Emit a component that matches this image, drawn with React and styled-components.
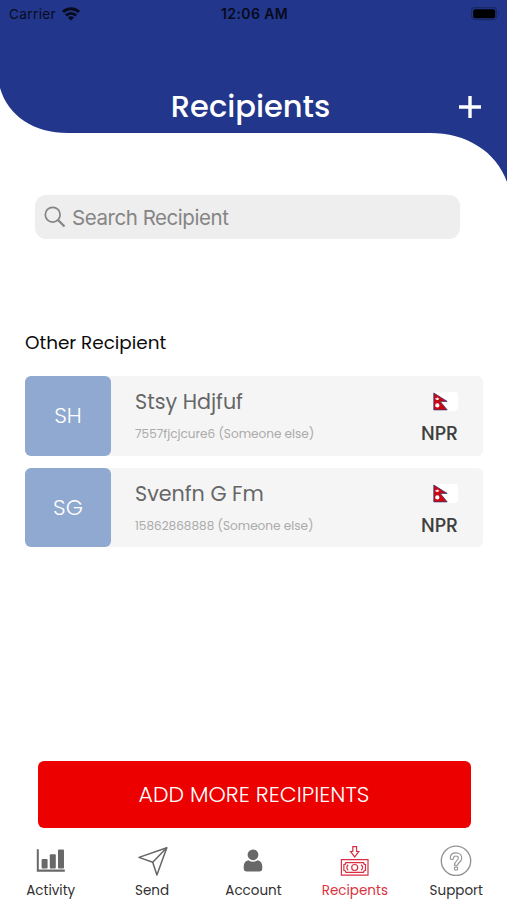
import styled, { createGlobalStyle } from "styled-components";

const GlobalStyle = createGlobalStyle`
  * {
    box-sizing: border-box;
  }
  body {
    margin: 0;
    background: #fff;
    font-family: Poppins, Inter, "Liberation Sans", sans-serif;
  }
`;

const Screen = styled.div`
  width: 507px;
  height: 900px;
  display: flex;
  flex-direction: column;
  background: #fff;
  overflow: hidden;
`;
const Header = styled.header`
  position: relative;
  height: 195px;
  flex: none;
`;
const Curve = styled.svg`
  position: absolute;
  top: 0;
  left: 0;
`;
const StatusBar = styled.div`
  position: relative;
  display: grid;
  grid-template-columns: 1fr auto 1fr;
  align-items: center;
  height: 27px;
  padding: 0 7px 0 9px;
  font-family: Inter, sans-serif;
  font-size: 14px;
  color: #070b1c;
`;
const Carrier = styled.div`
  display: flex;
  align-items: center;
  gap: 6px;
  font-size: 13.5px;
  letter-spacing: 0.4px;
`;
const Clock = styled.div`
  font-weight: 600;
  letter-spacing: 0.4px;
`;
const Battery = styled.svg`
  justify-self: end;
`;
const TitleBar = styled.div`
  position: relative;
  display: grid;
  grid-template-columns: 1fr auto 1fr;
  align-items: center;
  height: 46px;
  margin-top: 57px;
  padding: 0 26px 0 20px;
`;
const Title = styled.h1`
  grid-column: 2;
  margin: 0;
  font-size: 30.5px;
  line-height: 46px;
  font-weight: 500;
  color: #fff;
`;
const AddIcon = styled.svg`
  justify-self: end;
`;
const SearchBox = styled.div`
  display: flex;
  align-items: center;
  flex: none;
  gap: 6px;
  width: 425px;
  height: 44px;
  margin-left: 35px;
  padding-left: 9px;
  border-radius: 11px;
  background: #eee;
  font-family: Inter, sans-serif;
  font-size: 20.5px;
  letter-spacing: -0.45px;
  color: #858585;
`;
const SectionTitle = styled.h2`
  margin: 92px 0 0 25px;
  font-size: 18.4px;
  line-height: 24px;
  font-weight: 400;
  color: #0b0b0b;
`;
const List = styled.div`
  display: flex;
  flex-direction: column;
  gap: 12px;
  margin: 21px 24px 0 25px;
`;
const Row = styled.div`
  display: flex;
  height: 79.5px;
  border-radius: 6px;
  background: #f5f5f5;
`;
const Avatar = styled.div`
  display: flex;
  align-items: center;
  justify-content: center;
  width: 86px;
  border-radius: 6px;
  background: #8fa9d0;
  color: #fff;
  font-size: 22px;
  font-weight: 300;
`;
const Details = styled.div`
  flex: 1;
  padding: 11px 0 0 24px;
`;
const Name = styled.div`
  font-size: 20.7px;
  line-height: 30px;
  color: #666;
`;
const Meta = styled.div`
  margin-top: 8px;
  font-size: 12.05px;
  line-height: 18px;
  color: #aaa;
`;
const Currency = styled.div`
  display: flex;
  flex-direction: column;
  align-items: flex-end;
  padding: 16px 25px 0 0;
  font-size: 19px;
  line-height: 24px;
  font-weight: 500;
  color: #3f3f3f;
`;
const Flag = styled.svg`
  margin-bottom: 11px;
`;
const AddButton = styled.button`
  flex: none;
  width: 433px;
  height: 67px;
  margin: auto 0 0 37.5px;
  padding: 0;
  border: 0;
  border-radius: 6px;
  background: #ec0000;
  color: #fff;
  font-family: inherit;
  font-size: 22px;
  font-weight: 300;
`;
const TabBar = styled.nav`
  display: grid;
  grid-template-columns: repeat(5, 1fr);
  flex: none;
  width: 507px;
  height: 72px;
  padding-top: 16px;
`;
const Tab = styled.div`
  display: flex;
  flex-direction: column;
  align-items: center;
  font-size: 13.5px;
  line-height: 20px;
  color: ${(props) => (props.$active ? "#d9343e" : "#303030")};

  svg {
    margin-bottom: 5px;
  }
`;

function WifiIcon() {
  return (
    <svg width="18" height="14" viewBox="0 0 18 14" fill="none" stroke="#070b1c" strokeWidth="2.9">
      <path d="M1 5a11.4 11.4 0 0 1 16 0" />
      <path d="M3.9 8.5a7.2 7.2 0 0 1 10.2 0" />
      <path d="M9 13.6 5.9 10.6a4.4 4.4 0 0 1 6.2 0z" fill="#070b1c" stroke="none" />
    </svg>
  );
}

function NepalFlag() {
  return (
    <Flag width="25" height="19" viewBox="0 0 25 19">
      <path d="M1 0H22Q25 0 25 3V15Q25 19 21 19H1z" fill="#fff" />
      <path d="M.8 1 14.2 9.4H7.2L14.2 17.9H.8z" fill="#cc0712" stroke="#39356f" strokeWidth=".8" />
      <path d="M2 6.2a2.3 2.3 0 0 0 4.5 0l-1.1.3-1.1-1.2-1.1 1.2z" fill="#fff" />
      <circle cx="4.3" cy="13.4" r="2.1" fill="#fff" />
    </Flag>
  );
}

function ActivityIcon() {
  return (
    <svg width="34" height="32" viewBox="0 0 34 32" fill="#686868">
      <path d="M2.8 5.3h2v20.2h26v2.2h-28z" />
      <rect x="7.6" y="15" width="6" height="9.6" rx="1" />
      <rect x="15.8" y="10.2" width="6" height="14.4" rx="1" />
      <rect x="24" y="5.6" width="6" height="19" rx="1" />
    </svg>
  );
}

function SendIcon() {
  return (
    <svg width="34" height="32" viewBox="0 0 34 32" fill="none" stroke="#656565" strokeWidth="1.5" strokeLinejoin="round">
      <path d="M31.8 3.8 4 13.4 17.7 18.2 21.9 31z" />
      <path d="M31.8 3.8 17.7 18.2" />
    </svg>
  );
}

function AccountIcon() {
  return (
    <svg width="34" height="32" viewBox="0 0 34 32" fill="#686868">
      <circle cx="17" cy="10.8" r="5.4" />
      <path d="M12.5 16.2q4.5 3 9 0 4.8.7 4.8 6.5v1.8q0 3-3 3H10.7q-3 0-3-3v-1.8q0-5.8 4.8-6.5z" />
    </svg>
  );
}

function RecipientsIcon() {
  return (
    <svg width="34" height="32" viewBox="0 0 34 32" fill="none" stroke="#d92e43" strokeWidth="1.2">
      <path d="M14.8 2.7h3.8v4.8h2.2L16.7 12.9l-4.1-5.4h2.2z" />
      <path d="M3.4 15.7h26.6v15.4H3.4z" />
      <path d="M7.9 18.6h17.6q.1 2 2 2v5.8q-1.9 0-2 2H7.9q-.1-2-2-2v-5.8q1.9 0 2-2z" />
      <circle cx="16.7" cy="23.5" r="3" />
      <path d="M10.2 20.8q-2.8 2.7 0 5.4M23.2 20.8q2.8 2.7 0 5.4" />
    </svg>
  );
}

function SupportIcon() {
  return (
    <svg width="34" height="32" viewBox="0 0 34 32" fill="none" stroke="#949494" strokeWidth="1.1">
      <circle cx="17" cy="16.8" r="14.7" strokeWidth="1.4" />
      <path d="M11.3 14.2c0-3.7 2.5-5.3 5.7-5.3 3.3 0 5.7 2 5.7 5 0 4.5-4.1 4.5-4.1 7.3h-3.2c0-4.3 4-4.7 4-7.1 0-2.9-4.9-2.9-4.9.1 0 1.8-3.2 1.8-3.2 0z" />
      <circle cx="17" cy="24.6" r="1.7" />
    </svg>
  );
}

const recipients = [
  { initials: "SH", name: "Stsy Hdjfuf", meta: "7557fjcjcure6 (Someone else)" },
  { initials: "SG", name: "Svenfn G Fm", meta: "15862868888 (Someone else)" },
];

const tabs = [
  { label: "Activity", Icon: ActivityIcon },
  { label: "Send", Icon: SendIcon },
  { label: "Account", Icon: AccountIcon },
  { label: "Recipents", Icon: RecipientsIcon, active: true },
  { label: "Support", Icon: SupportIcon },
];

export default function App() {
  return (
    <Screen>
      <GlobalStyle />
      <Header>
        <Curve width="507" height="184" viewBox="0 0 507 184">
          <path d="M0 0H507V182C496 151 466 133 430 133H68C34 133 8 116 0 88z" fill="#22368c" />
        </Curve>
        <StatusBar>
          <Carrier>
            Carrier
            <WifiIcon />
          </Carrier>
          <Clock>12:06 AM</Clock>
          <Battery width="29" height="14" viewBox="0 0 29 14">
            <rect x=".6" y=".6" width="25" height="12" rx="3.5" fill="none" stroke="#19286b" strokeWidth="1.2" />
            <rect x="2.2" y="2.2" width="22" height="9" rx="2" fill="#000" />
            <path d="M27 4.5q2 2.2 0 4.5z" fill="#19286b" />
          </Battery>
        </StatusBar>
        <TitleBar>
          <Title>Recipients</Title>
          <AddIcon width="22" height="22" viewBox="0 0 22 22">
            <path d="M11 0V22M0 11H22" stroke="#fff" strokeWidth="3.4" />
          </AddIcon>
        </TitleBar>
      </Header>
      <SearchBox>
        <svg width="22" height="22" viewBox="0 0 22 22" fill="none" stroke="#858585">
          <circle cx="8.7" cy="8.7" r="7.4" strokeWidth="1.7" />
          <path d="M14 14 20.5 20.5" strokeWidth="2.3" />
        </svg>
        Search Recipient
      </SearchBox>
      <SectionTitle>Other Recipient</SectionTitle>
      <List>
        {recipients.map((item) => (
          <Row key={item.initials}>
            <Avatar>{item.initials}</Avatar>
            <Details>
              <Name>{item.name}</Name>
              <Meta>{item.meta}</Meta>
            </Details>
            <Currency>
              <NepalFlag />
              NPR
            </Currency>
          </Row>
        ))}
      </List>
      <AddButton>ADD MORE RECIPIENTS</AddButton>
      <TabBar>
        {tabs.map(({ label, Icon, active }) => (
          <Tab key={label} $active={active}>
            <Icon />
            {label}
          </Tab>
        ))}
      </TabBar>
    </Screen>
  );
}
